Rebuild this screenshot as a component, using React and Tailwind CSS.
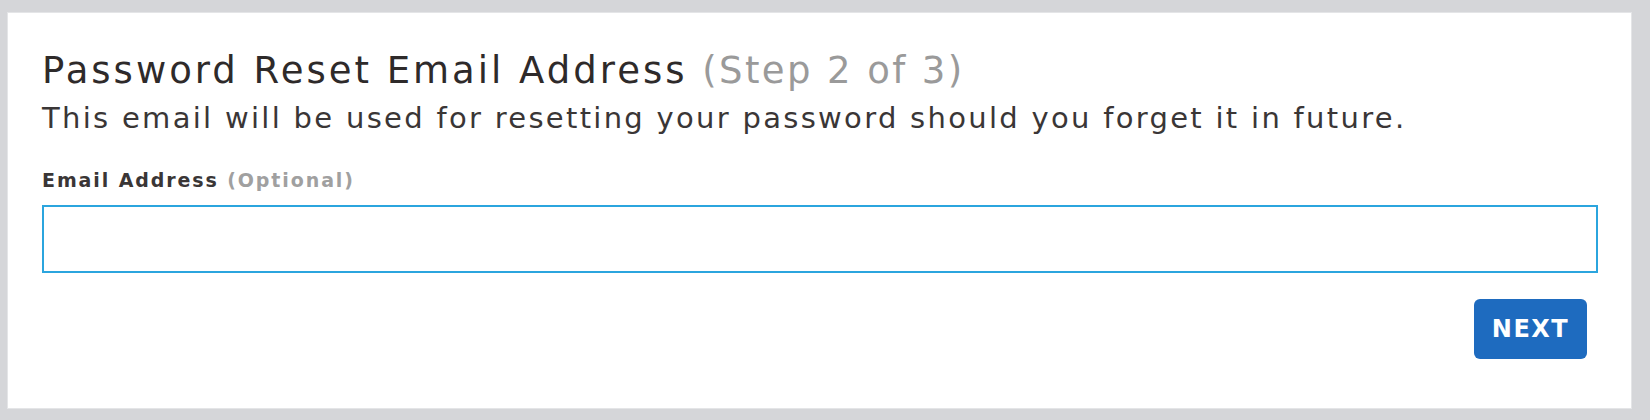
export default function App() {
  return (
    <div className="w-[1650px] h-[420px] bg-[#d5d6d9] pt-[12px] pl-[7px]" style={{ fontFamily: '"DejaVu Sans", "Liberation Sans", sans-serif' }}>
      <div className="w-[1625px] h-[397px] bg-white border border-[#e4e5e7] px-[34px] pt-[36px] flex flex-col">
        <div className="text-[37px] leading-[44px] tracking-[3px] text-[#2e2a2a] whitespace-nowrap">
          Password Reset Email Address <span className="text-[#9a9a9a] tracking-[2.4px]">(Step 2 of 3)</span>
        </div>
        <div className="mt-[7px] text-[29px] leading-[36px] tracking-[2.3px] text-[#3a3636] whitespace-nowrap">
          This email will be used for resetting your password should you forget it in future.
        </div>
        <div className="mt-[32px] text-[19px] leading-[24px] tracking-[1.9px] font-bold text-[#3a3636] whitespace-nowrap">
          Email Address <span className="text-[#a0a0a0]">(Optional)</span>
        </div>
        <input className="mt-[13px] w-[1556px] h-[68px] border-2 border-[#2ba5de] outline-none" />
        <div className="flex justify-end pr-[10px] mt-[26px]">
          <button className="w-[113px] h-[60px] rounded-[6px] bg-[#1e6bbf] text-white font-bold text-[24px] tracking-[1.5px]">NEXT</button>
        </div>
      </div>
    </div>
  );
}
